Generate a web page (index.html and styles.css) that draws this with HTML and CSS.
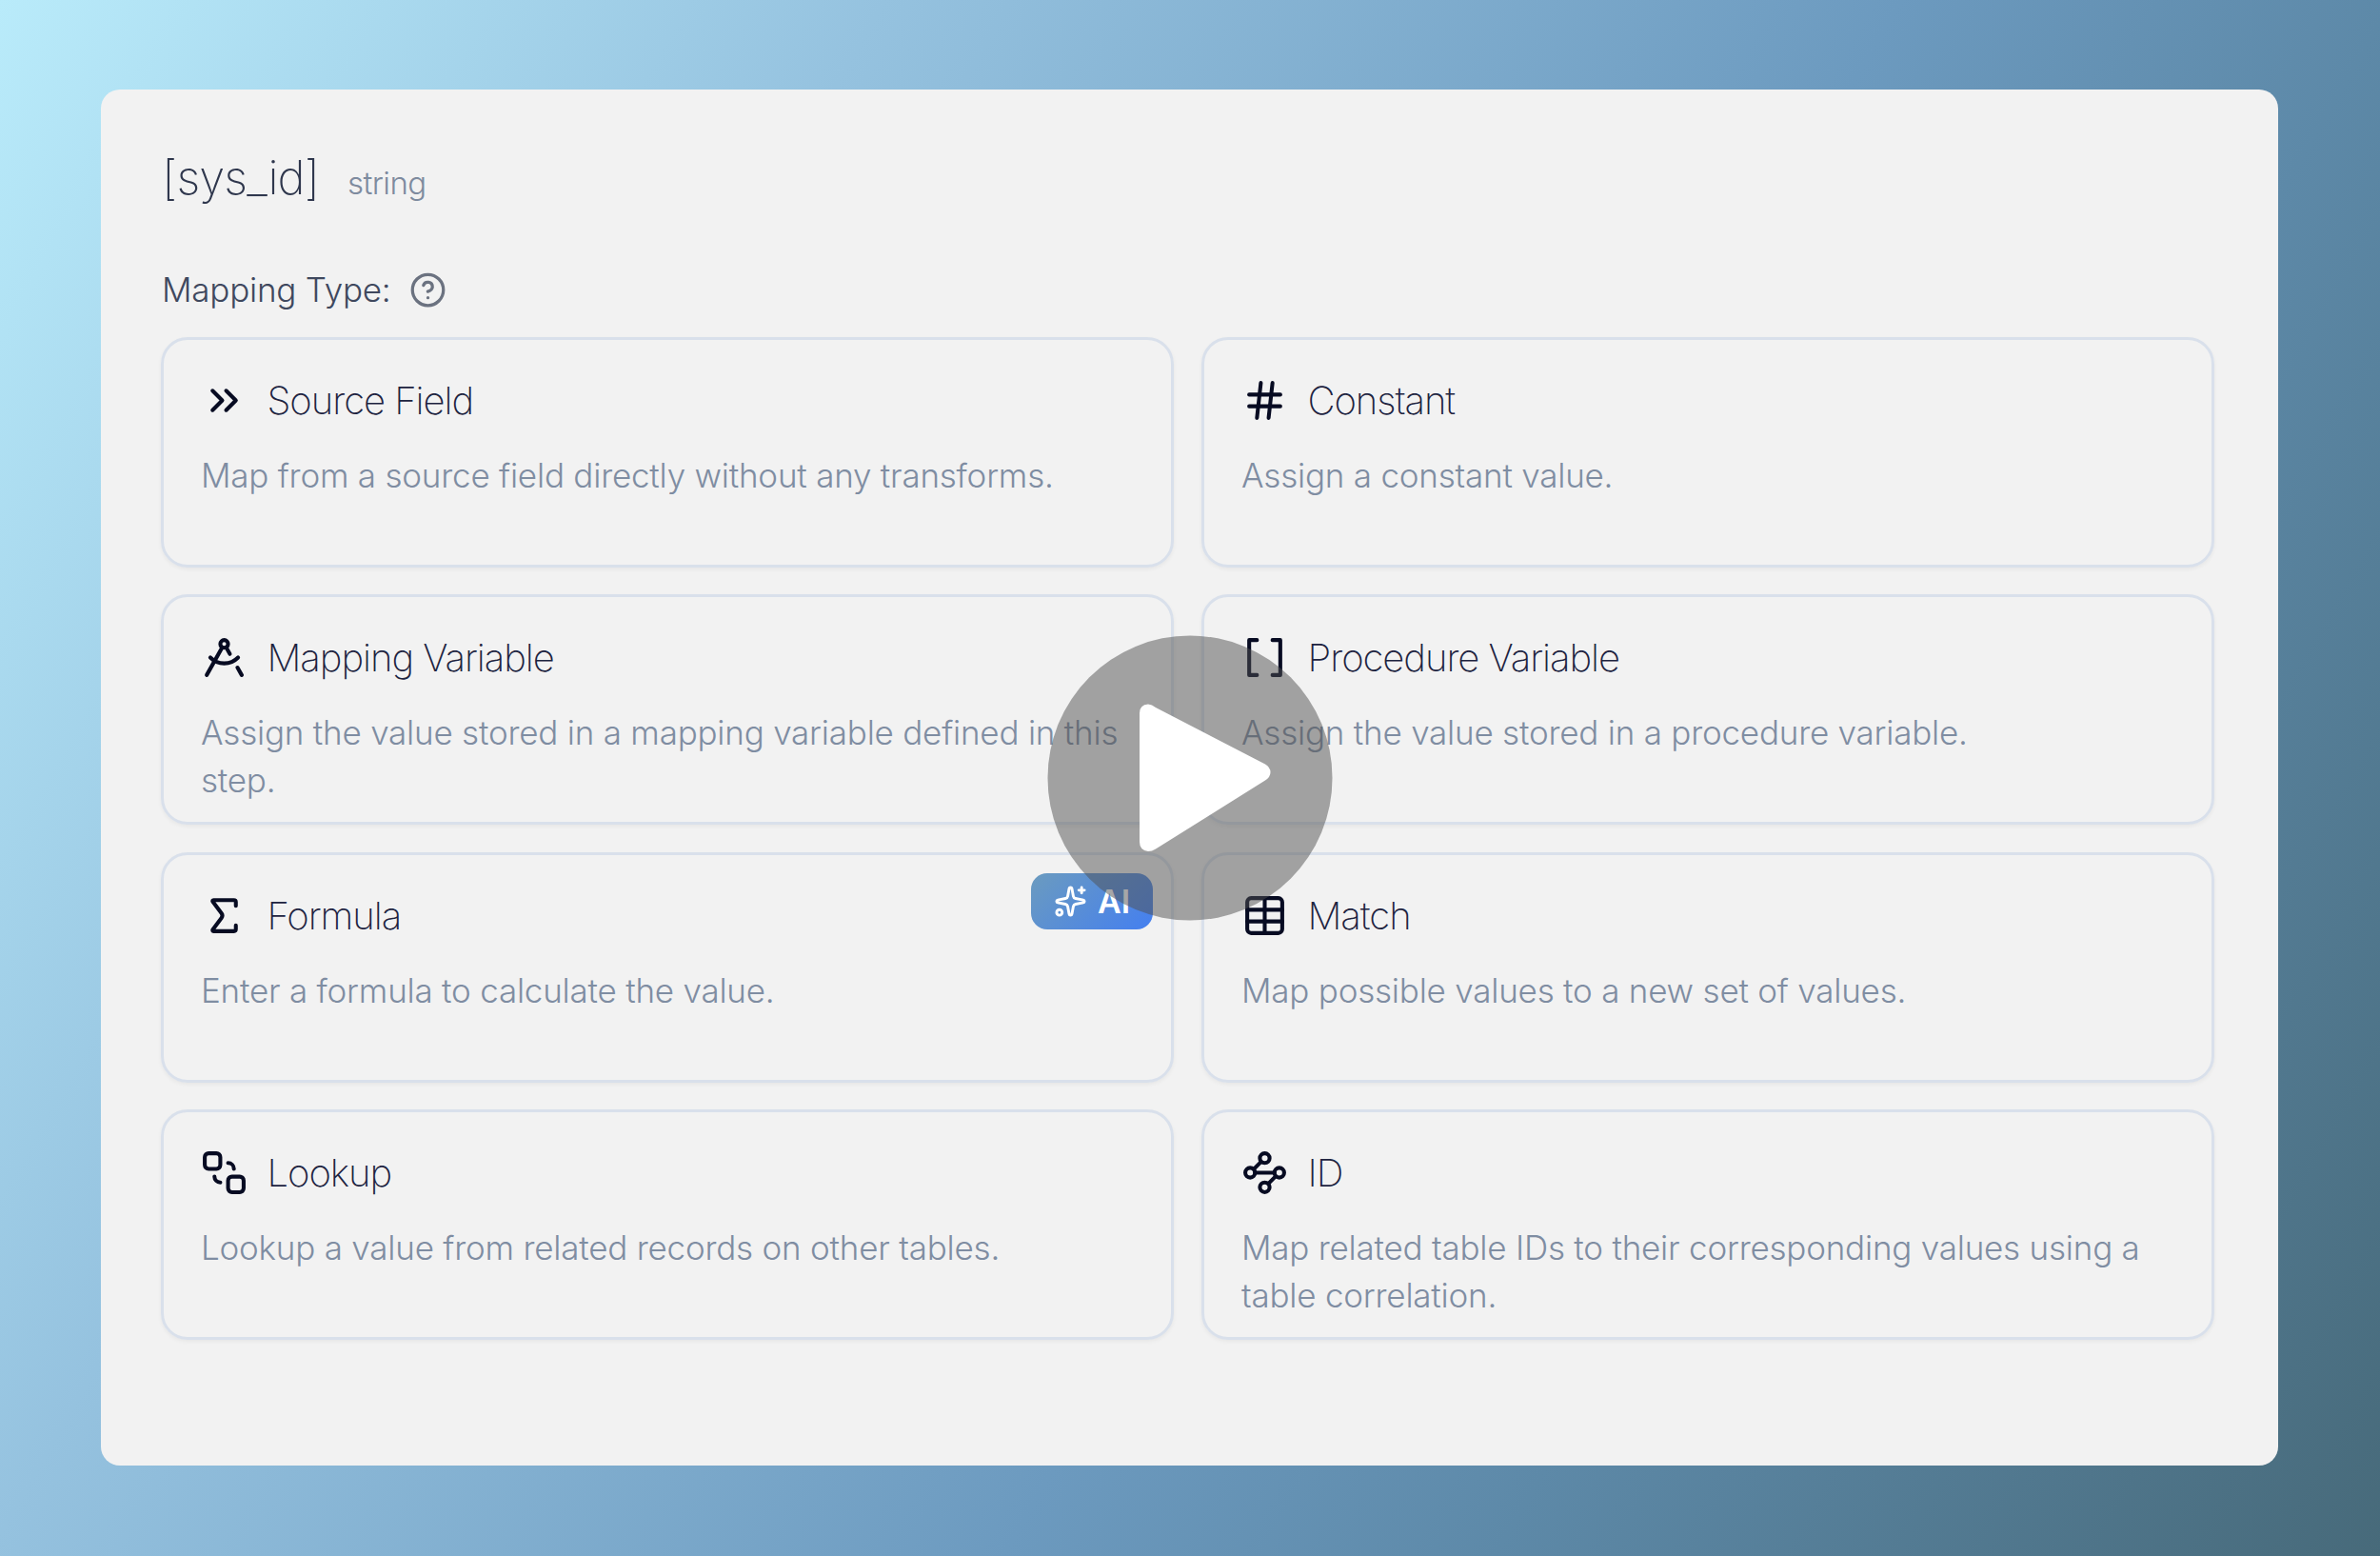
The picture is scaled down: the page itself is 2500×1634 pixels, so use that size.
FILE: index.html
```
<!DOCTYPE html>
<html lang="en">
<head>
    <meta charset="UTF-8">
    <meta name="viewport" content="width=device-width, initial-scale=1.0">
    <title>Mapping Type</title>
    <link rel="stylesheet" href="styles.css">
</head>
<body>
    <div class="panel">
        <div class="field-header">
            <h1>[sys_id]</h1>
            <span class="field-type">string</span>
        </div>

        <div class="mapping-label">
            <span>Mapping Type:</span>
            <svg class="help-icon" viewBox="0 0 24 24">
                <circle cx="12" cy="12" r="10"/>
                <path d="M9.09 9a3 3 0 0 1 5.83 1c0 2-3 3-3 3"/>
                <path d="M12 17h.01"/>
            </svg>
        </div>

        <div class="card-grid">
            <div class="card">
                <div class="card-title">
                    <svg class="icon" viewBox="0 0 24 24">
                        <path d="m6 17 5-5-5-5"/>
                        <path d="m13 17 5-5-5-5"/>
                    </svg>
                    <h2>Source Field</h2>
                </div>
                <p>Map from a source field directly without any transforms.</p>
            </div>

            <div class="card">
                <div class="card-title">
                    <svg class="icon" viewBox="0 0 24 24">
                        <path d="M4 9h16"/>
                        <path d="M4 15h16"/>
                        <path d="M10 3 8 21"/>
                        <path d="m16 3-2 18"/>
                    </svg>
                    <h2>Constant</h2>
                </div>
                <p>Assign a constant value.</p>
            </div>

            <div class="card">
                <div class="card-title">
                    <svg class="icon" viewBox="0 0 24 24">
                        <circle cx="12" cy="5" r="2"/>
                        <path d="m12.99 6.74 1.93 3.44"/>
                        <path d="M19.136 12a10 10 0 0 1-14.271 0"/>
                        <path d="m21 21-2.16-3.84"/>
                        <path d="m3 21 8.02-14.26"/>
                    </svg>
                    <h2>Mapping Variable</h2>
                </div>
                <p>Assign the value stored in a mapping variable defined in this step.</p>
            </div>

            <div class="card">
                <div class="card-title">
                    <svg class="icon" viewBox="0 0 24 24">
                        <path d="M16 3h4v18h-4"/>
                        <path d="M8 21H4V3h4"/>
                    </svg>
                    <h2>Procedure Variable</h2>
                </div>
                <p>Assign the value stored in a procedure variable.</p>
            </div>

            <div class="card">
                <div class="card-title">
                    <svg class="icon" viewBox="0 0 24 24">
                        <path d="M18 7V5a1 1 0 0 0-1-1H6.5a.5.5 0 0 0-.4.8l4.5 6a2 2 0 0 1 0 2.4l-4.5 6a.5.5 0 0 0 .4.8H17a1 1 0 0 0 1-1v-2"/>
                    </svg>
                    <h2>Formula</h2>
                </div>
                <p>Enter a formula to calculate the value.</p>
                <div class="ai-badge">
                    <svg class="sparkles" viewBox="0 0 24 24">
                        <path d="M11.017 2.814a1 1 0 0 1 1.966 0l1.051 5.558a2 2 0 0 0 1.594 1.594l5.558 1.051a1 1 0 0 1 0 1.966l-5.558 1.051a2 2 0 0 0-1.594 1.594l-1.051 5.558a1 1 0 0 1-1.966 0l-1.051-5.558a2 2 0 0 0-1.594-1.594l-5.558-1.051a1 1 0 0 1 0-1.966l5.558-1.051a2 2 0 0 0 1.594-1.594z"/>
                        <path d="M20 2v4"/>
                        <path d="M22 4h-4"/>
                        <circle cx="4" cy="20" r="2"/>
                    </svg>
                    <span>AI</span>
                </div>
            </div>

            <div class="card">
                <div class="card-title">
                    <svg class="icon" viewBox="0 0 24 24">
                        <path d="M12 3v18"/>
                        <rect x="3" y="3" width="18" height="18" rx="2"/>
                        <path d="M3 9h18"/>
                        <path d="M3 15h18"/>
                    </svg>
                    <h2>Match</h2>
                </div>
                <p>Map possible values to a new set of values.</p>
            </div>

            <div class="card">
                <div class="card-title">
                    <svg class="icon" viewBox="0 0 24 24">
                        <rect x="2" y="2" width="8" height="8" rx="2"/>
                        <path d="M14 7a3 3 0 0 1 3 3"/>
                        <path d="M10 17a3 3 0 0 1-3-3"/>
                        <rect x="14" y="14" width="8" height="8" rx="2"/>
                    </svg>
                    <h2>Lookup</h2>
                </div>
                <p>Lookup a value from related records on other tables.</p>
            </div>

            <div class="card">
                <div class="card-title">
                    <svg class="icon" viewBox="0 0 24 24">
                        <circle cx="12" cy="4.5" r="2.5"/>
                        <path d="m10.2 6.3-3.9 3.9"/>
                        <circle cx="4.5" cy="12" r="2.5"/>
                        <path d="M7 12h10"/>
                        <circle cx="19.5" cy="12" r="2.5"/>
                        <path d="m13.8 17.7 3.9-3.9"/>
                        <circle cx="12" cy="19.5" r="2.5"/>
                    </svg>
                    <h2>ID</h2>
                </div>
                <p>Map related table IDs to their corresponding values using a table correlation.</p>
            </div>
        </div>
    </div>

    <svg class="play-button" viewBox="0 0 300 300">
        <circle cx="150" cy="150" r="149.5"/>
        <path d="M97 82Q97 73 106 72.500Q110 72.500 114 76L229 135.500Q234.500 139 234.500 144Q234.500 149 229 152.500L114 224.500Q110 227 106 227Q97 226 97 217Z"/>
    </svg>
</body>
</html>
```

FILE: styles.css
```
* {
    box-sizing: border-box;
}
body {
    font-family: 'Inter', sans-serif;
    margin: 0;
    height: 100vh;
    padding: 94px 107px 95px 106px;
    background: linear-gradient(120deg, #b9ebfa 0%, #95c2df 27%, #6c9abf 58%, #5d89a8 73%, #476a7a 100%);
    position: relative;
    overflow: hidden;
}
.panel {
    height: 100%;
    padding: 61px 67px 0 63px;
    background: #f2f2f2;
    border-radius: 20px;
}
.field-header {
    display: flex;
    align-items: baseline;
    gap: 30px;
    height: 64px;
    padding-left: 1px;
}
h1, h2, p {
    margin: 0;
}
h1 {
    font-size: 49px;
    line-height: 64px;
    font-weight: 250;
    letter-spacing: -0.018em;
    color: #2f374d;
}
.field-type {
    font-size: 33px;
    font-weight: 300;
    letter-spacing: -0.6px;
    color: #7e8b9f;
}
.mapping-label {
    display: flex;
    align-items: center;
    gap: 20px;
    height: 50px;
    margin-top: 60px;
    padding-left: 1px;
    font-size: 35px;
    font-weight: 300;
    letter-spacing: -0.22px;
    color: #3f485e;
}
.help-icon {
    width: 39px;
    height: 39px;
    fill: none;
    stroke: #6b7280;
    stroke-width: 2;
    stroke-linecap: round;
    stroke-linejoin: round;
}
.card-grid {
    display: grid;
    grid-template-columns: 1fr 1fr;
    grid-auto-rows: 242px;
    gap: 28.4px 29px;
    margin-top: 25px;
}
.card {
    position: relative;
    padding: 39px;
    border: 3px solid #d9e0eb;
    border-radius: 28px;
    box-shadow: 0 2px 4px rgba(0,0,0,0.05);
}
.card-title {
    display: flex;
    align-items: center;
    gap: 20.5px;
    height: 49px;
}
.card-title h2 {
    padding-top: 1px;
    font-size: 40px;
    line-height: 50px;
    font-weight: 200;
    letter-spacing: -0.026em;
    color: #1d2340;
}
.icon {
    width: 49px;
    height: 49px;
    fill: none;
    stroke: #070b22;
    stroke-width: 2;
    stroke-linecap: round;
    stroke-linejoin: round;
}
.card p {
    margin-top: 30px;
    font-size: 35px;
    line-height: 49.5px;
    font-weight: 300;
    letter-spacing: -0.22px;
    color: #7f8da2;
}
.ai-badge {
    position: absolute;
    top: 19px;
    right: 19px;
    width: 128px;
    height: 59px;
    display: flex;
    align-items: center;
    justify-content: center;
    gap: 11px;
    padding-top: 1px;
    border-radius: 17px;
    background: linear-gradient(135deg, #6b9bbf, #447ff0);
    color: #fff;
    font-size: 34px;
    font-weight: 600;
}
.sparkles {
    width: 35px;
    height: 35px;
    fill: none;
    stroke: #fff;
    stroke-width: 2;
    stroke-linecap: round;
    stroke-linejoin: round;
}
/* video overlay */
.play-button {
    position: absolute;
    left: 1100px;
    top: 667px;
    width: 300px;
    height: 300px;
    fill: #fff;
}
.play-button circle {
    fill: #505050;
    fill-opacity: 0.5;
}
```
